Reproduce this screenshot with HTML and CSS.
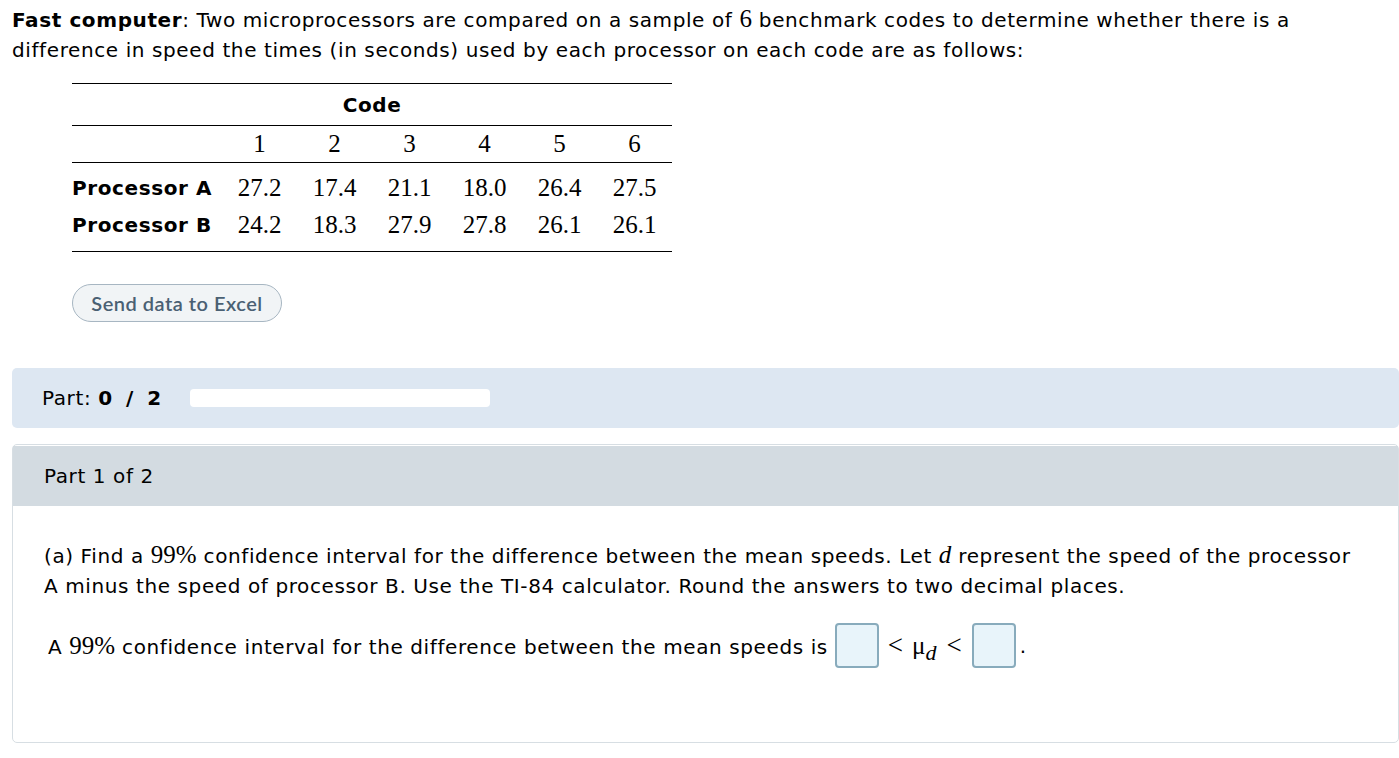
FILE: index.html
```html
<!DOCTYPE html>
<html>
<head>
<meta charset="utf-8">
<link rel="stylesheet" href="styles.css">
</head>
<body>
<div class="page">
  <p class="intro"><b>Fast computer</b>: Two microprocessors are compared on a sample of <span class="m">6</span> benchmark codes to determine whether there is a<br>difference in speed the times (in seconds) used by each processor on each code are as follows:</p>

  <table class="data">
    <colgroup><col class="c-lab"><col class="c-num"><col class="c-num"><col class="c-num"><col class="c-num"><col class="c-num"><col class="c-num"></colgroup>
    <tr class="code-row"><th colspan="7" class="code">Code</th></tr>
    <tr class="num-row"><td></td><td>1</td><td>2</td><td>3</td><td>4</td><td>5</td><td>6</td></tr>
    <tr class="first"><th class="lab">Processor A</th><td>27.2</td><td>17.4</td><td>21.1</td><td>18.0</td><td>26.4</td><td>27.5</td></tr>
    <tr class="last"><th class="lab">Processor B</th><td>24.2</td><td>18.3</td><td>27.9</td><td>27.8</td><td>26.1</td><td>26.1</td></tr>
  </table>

  <div class="btn-wrap"><button class="excel">Send data to Excel</button></div>

  <div class="partbar">
    <span class="partlabel">Part: <b>0 / 2</b></span>
    <span class="progress"></span>
  </div>

  <div class="panel">
    <div class="panel-head">Part 1 of 2</div>
    <div class="panel-body">
      <p class="q">(a) Find a <span class="m">99%</span> confidence interval for the difference between the mean speeds. Let <i class="m">d</i> represent the speed of the processor<br>A minus the speed of processor B. Use the TI-84 calculator. Round the answers to two decimal places.</p>
      <div class="answer">
        <span>A <span class="m">99%</span> confidence interval for the difference between the mean speeds is</span>
        <span class="box"></span>
        <span class="m rel">&lt;<span class="mu">μ</span><sub>d</sub><span class="lt">&lt;</span></span>
        <span class="box box2"></span><span class="dot">.</span>
      </div>
    </div>
  </div>
</div>
</body>
</html>
```

FILE: styles.css
```css
html, body {
  margin: 0;
  padding: 0;
  background: #ffffff;
}
.page {
  font-family: "DejaVu Sans", Verdana, sans-serif;
  font-size: 20px;
  letter-spacing: 0.6px;
  color: #000;
  padding: 0 0 0 12px;
}
.intro {
  margin: 0;
  padding-top: 4px;
  line-height: 30px;
  white-space: nowrap;
}
.m {
  font-family: "Liberation Serif", "Times New Roman", serif;
  font-size: 25px;
  letter-spacing: 0;
}
.data {
  margin: 18px 0 0 60px;
  width: 600px;
  border-collapse: collapse;
  border-top: 1px solid #000;
  border-bottom: 1px solid #000;
  table-layout: fixed;
}
.c-lab {
  width: 150px;
}
.c-num {
  width: 75px;
}
.data td {
  font-family: "Liberation Serif", "Times New Roman", serif;
  font-size: 25px;
  letter-spacing: 0;
  text-align: center;
  padding: 0;
  line-height: 30px;
}
.data th.code {
  font-weight: bold;
  font-size: 20px;
  line-height: 30px;
  padding: 6px 0 5px;
  border-bottom: 1px solid #000;
  text-align: center;
}
.num-row td {
  padding: 3px 0 3px;
  border-bottom: 1px solid #000;
}
.data th.lab {
  text-align: left;
  font-size: 20px;
  font-weight: bold;
  line-height: 30px;
  white-space: nowrap;
  padding: 0;
}
.first td, .first th.lab {
  padding-top: 10px;
  padding-bottom: 4px;
}
.last td, .last th.lab {
  padding-top: 3px;
  padding-bottom: 11px;
}
.btn-wrap {
  margin: 32px 0 0 60px;
}
.excel {
  font-family: "Lato", "Open Sans", sans-serif;
  font-size: 20px;
  font-weight: 600;
  letter-spacing: 0.5px;
  color: #4a6073;
  background: #f1f4f6;
  border: 1px solid #a7b6c2;
  border-radius: 19px;
  height: 38px;
  width: 210px;
  padding: 0;
}
.partbar {
  margin-top: 46px;
  height: 60px;
  background: #dde7f2;
  border-radius: 5px;
  display: flex;
  align-items: center;
  padding-left: 30px;
}
.partlabel {
  width: 148px;
}
.partlabel b {
  letter-spacing: 1.5px;
  word-spacing: 4px;
}
.progress {
  width: 300px;
  height: 18px;
  background: #fff;
  border-radius: 4px;
}
.panel {
  margin-top: 16px;
  border: 1px solid #d7dee3;
  border-radius: 5px;
  height: 296px;
  padding-top: 1px;
}
.panel-head {
  background: #d3dbe1;
  height: 60px;
  line-height: 60px;
  padding-left: 31px;
}
.panel-body {
  padding: 34px 0 0 31px;
}
.q {
  margin: 0;
  line-height: 30px;
  white-space: nowrap;
}
.answer {
  display: flex;
  align-items: center;
  margin-top: 22px;
  padding-left: 4px;
}
.box {
  display: inline-block;
  width: 40px;
  height: 41px;
  background: #e8f4fa;
  border: 2px solid #88abbc;
  border-radius: 4px;
  margin-left: 7px;
}
.rel {
  display: inline-flex;
  align-items: baseline;
  margin: 0 0 0 9px;
  font-size: 27px;
}
.mu {
  margin-left: 9px;
  font-size: 25px;
}
.rel sub {
  font-size: 22px;
  font-style: italic;
  position: relative;
  top: 6px;
  vertical-align: baseline;
}
.lt {
  margin-left: 10px;
}
.box2 {
  margin-left: 10px;
}
.dot {
  margin-left: 4px;
}
```
